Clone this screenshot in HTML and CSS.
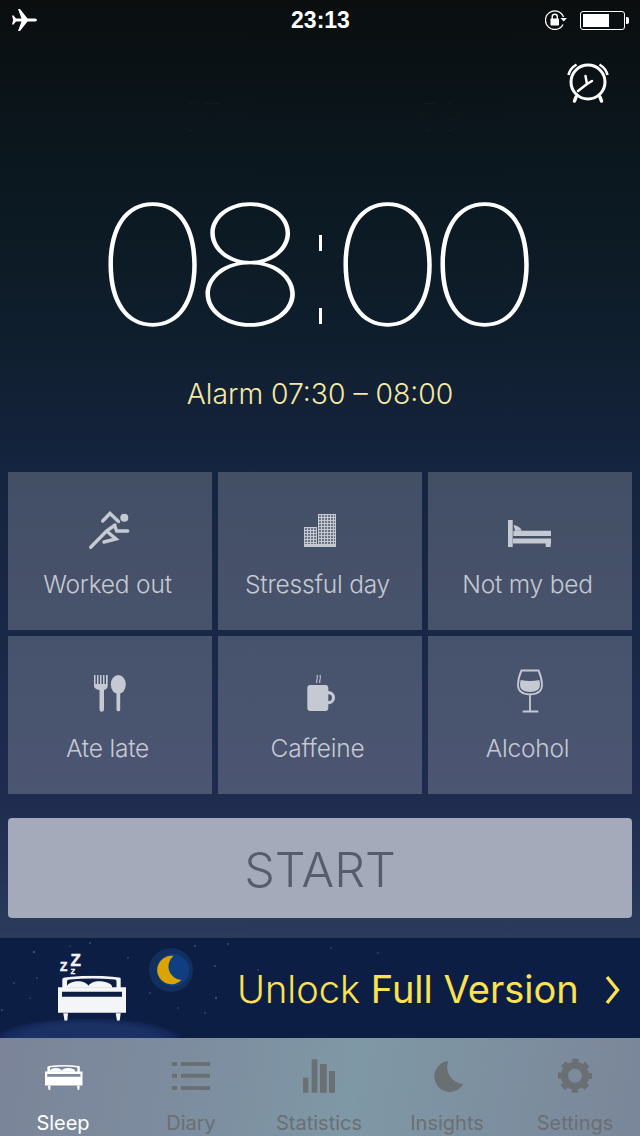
FILE: index.html
```html
<!DOCTYPE html>
<html lang="en">
<head>
	<meta charset="UTF-8">
	<title>Sleep</title>
	<link rel="stylesheet" href="styles.css">
</head>
<body>
	<svg class="defs" width="0" height="0">
		<symbol id="bed" viewBox="0 0 68 45">
			<path d="M4.300 12.500V4.500C4.300 2.500 5 2 7 1.700C24 -.6 44 -.6 61 1.700C63 2 62.700 2.500 62.700 4.500V12.500H58.500V6C58.500 4.500 58 4 56.500 3.800C42 2.300 26 2.300 11.500 3.800C10 4 9 4.500 9 6V12.500Z"/>
			<path d="M9 12V10.500C10 7 16 5.500 20 5.500C25 5.500 29 7.500 30.500 10C32 7.500 36 5.500 41 5.500C46 5.500 53 7 54 10.500V12Z"/>
			<path d="M0 11.500H68V37H0ZM4 16V21H64V16Z" fill-rule="evenodd"/>
			<path d="M5.300 37.500H10L9.300 45H6.500ZM57.700 37.500H62.700L61.700 45H59Z"/>
		</symbol>
	</svg>

	<div class="status">
		<svg class="plane" width="25" height="24" viewBox="0 0 25 24"><path d="M25 12C25 11 23.500 10.500 22 10.500H15.500L8 1H6L9.500 10.500H4L1.500 7.500H0L1.200 12L0 16.500H1.500L4 13.500H9.500L6 23H8L15.500 13.500H22C23.500 13.500 25 13 25 12Z"/></svg>
		<div class="status-time">23:13</div>
		<div class="status-right">
			<svg class="lock" width="24" height="20" viewBox="0 0 24 20">
				<path d="M18 14.500A9.300 9.300 0 1 1 18.500 7" fill="none" stroke="#fff" stroke-width="1.300"/>
				<path d="M15.500 8H22L18.700 11.500Z" fill="#fff"/>
				<rect x="5.500" y="8.500" width="8.500" height="7" rx=".8" fill="#fff"/>
				<path d="M7.200 9V6.800A2.500 2.500 0 0 1 12.300 6.800V9" fill="none" stroke="#fff" stroke-width="1.400"/>
			</svg>
			<div class="battery"><div class="battery-fill"></div></div>
			<div class="battery-nub"></div>
		</div>
	</div>

	<div class="head">
		<span class="ghost ghost-hour">07</span>
		<span class="ghost ghost-min">59</span>
		<svg class="alarm-icon" width="44" height="42" viewBox="0 0 44 42">
			<circle cx="22" cy="20" r="17" fill="none" stroke="#fff" stroke-width="3"/>
			<path d="M2.500 13C3.500 8 6.500 5 10.500 2.500M41.500 13C40.500 8 37.500 5 33.500 2.500" fill="none" stroke="#fff" stroke-width="2.500"/>
			<path d="M19.500 14L21 22L26 19M21 22L12 29" fill="none" stroke="#fff" stroke-width="2.500" stroke-linecap="round" stroke-linejoin="round"/>
			<path d="M10 35L8.500 39M34 35L35.500 39" fill="none" stroke="#fff" stroke-width="3.500" stroke-linecap="round"/>
		</svg>
	</div>

	<div class="clock">
		<span class="clock-part">08</span>
		<div class="clock-colon"><i></i><i></i></div>
		<span class="clock-part">00</span>
	</div>
	<div class="alarm-time">Alarm 07:30 – 08:00</div>

	<div class="tags">
		<div class="tag">
			<svg class="tag-icon" width="48" height="48" viewBox="0 0 48 48">
				<circle cx="38.300" cy="11.700" r="4" class="solid"/>
				<path d="M16.700 15L24 7.500L32.500 15.500M29 20.500L30.700 25H41.700M29 19L20.500 25L4.700 41.300M20.500 25L30 33L18 36" class="line"/>
			</svg>
			<span>Worked out</span>
		</div>
		<div class="tag">
			<svg class="tag-icon" width="48" height="48" viewBox="0 0 48 48">
				<defs>
					<pattern id="win-a" width="3" height="3" patternUnits="userSpaceOnUse" x="8" y="21"><rect width="3" height="3" fill="#c5c9d2"/><rect x="1" y="1" width="2" height="2" fill="#6b7484"/></pattern>
					<pattern id="win-b" width="3" height="3" patternUnits="userSpaceOnUse" x="22" y="8"><rect width="3" height="3" fill="#c5c9d2"/><rect x="1" y="1" width="2" height="2" fill="#6b7484"/></pattern>
				</defs>
				<rect x="8" y="21" width="13" height="20" fill="url(#win-a)"/>
				<rect x="20" y="21" width="1" height="20" class="solid"/>
				<rect x="22" y="8" width="18" height="33" fill="url(#win-b)"/>
				<rect x="39" y="8" width="1" height="33" class="solid"/>
				<rect x="8" y="38" width="32" height="3" class="solid"/>
			</svg>
			<span>Stressful day</span>
		</div>
		<div class="tag">
			<svg class="tag-icon" width="48" height="48" viewBox="0 0 48 48">
				<g class="solid">
					<rect x="2" y="14" width="4.700" height="27"/>
					<path d="M7.500 19Q14 20 15.700 24.700H9Z"/>
					<path d="M7.300 24.700H44.500Q45 24.700 45 26V30H7.300Z"/>
					<rect x="7" y="32.500" width="38" height="5"/>
					<rect x="39.700" y="37" width="5" height="4"/>
				</g>
			</svg>
			<span>Not my bed</span>
		</div>
		<div class="tag">
			<svg class="tag-icon" width="48" height="48" viewBox="0 0 48 48">
				<path class="solid" d="M8 5H9.500V14H11V5H12.500V14H14V5H15.500V14H17V5H18.500V14H20V5H21.700V16C21.700 18 20 19.500 18 20V39.500A2 2 0 0 1 13.500 39.500V20C10 19.500 8 18 8 16Z"/>
				<ellipse cx="32.300" cy="14.500" rx="7.500" ry="9.500" class="solid"/>
				<path class="solid" d="M30.500 20H34.200V39.500A1.850 1.850 0 0 1 30.500 39.500Z"/>
			</svg>
			<span>Ate late</span>
		</div>
		<div class="tag">
			<svg class="tag-icon" width="48" height="48" viewBox="0 0 48 48">
				<rect x="11.300" y="15" width="21" height="26" rx="3" class="solid"/>
				<circle cx="32.500" cy="27.700" r="5" fill="none" stroke="#c5c9d2" stroke-width="3.200"/>
				<path d="M21 13C19.500 10.500 22.500 9.500 21 5M24 13C22.500 10.500 25.500 9.500 24 5" fill="none" stroke="#c5c9d2" stroke-width="1.100"/>
			</svg>
			<span>Caffeine</span>
		</div>
		<div class="tag">
			<svg class="tag-icon" width="48" height="48" viewBox="0 0 48 48">
				<path d="M15.500 .5H32.500Q36 8 36 15Q36 24 24 24.500Q12 24 12 15Q12 8 15.500 .5ZM24 24.500V41.500M16.700 41.500H32.300" fill="none" stroke="#c5c9d2" stroke-width="1.800"/>
				<path class="solid" d="M14.700 10Q24 12 33.300 10Q34 13 34 15Q34 22 24 22Q14 22 14 15Q14 12 14.700 10Z"/>
			</svg>
			<span>Alcohol</span>
		</div>
	</div>

	<div class="start">START</div>

	<div class="banner">
		<svg class="banner-bed" width="80" height="75" viewBox="0 0 80 75">
			<text x="20.500" y="15.500" class="zzz zzz-l">Z</text>
			<text x="10" y="21" class="zzz zzz-m">Z</text>
			<text x="20.700" y="24" class="zzz zzz-s">Z</text>
			<use href="#bed" x="8" y="25.700" width="68" height="45" fill="#f4f5f6"/>
		</svg>
		<svg class="banner-moon" width="44" height="44" viewBox="0 0 44 44">
			<circle cx="22" cy="22" r="22" fill="#12305f"/>
			<circle cx="24" cy="22" r="16" fill="#0f3f80"/>
			<path d="M24.500 8A14.200 14.200 0 1 0 32.500 32A13.500 13.500 0 0 1 24.500 8Z" fill="#d9a404"/>
		</svg>
		<div class="banner-text">Unlock <b>Full Version</b></div>
		<svg class="banner-arrow" width="15" height="30" viewBox="0 0 15 30"><path d="M2 2L12.500 15L2 28" fill="none" stroke="#fde24f" stroke-width="3.400"/></svg>
	</div>

	<div class="tabs">
		<div class="tab tab-on">
			<svg width="48" height="40" viewBox="0 0 48 40"><use href="#bed" x="6" y="9" width="37.700" height="25"/></svg>
			<span>Sleep</span>
		</div>
		<div class="tab">
			<svg width="48" height="40" viewBox="0 0 48 40"><path d="M5 6H10V10H5ZM14 6H43V10H14ZM5 17.700H10V21.700H5ZM14 17.700H43V21.700H14ZM5 30H10V34H5ZM14 30H43V34H14Z"/></svg>
			<span>Diary</span>
		</div>
		<div class="tab">
			<svg width="48" height="40" viewBox="0 0 48 40"><path d="M8 21.700H13.300V36.700H8ZM16.700 3.300H22.300V36.700H16.700ZM25 8H31.700V36.700H25ZM34 15H40V36.700H34Z"/></svg>
			<span>Statistics</span>
		</div>
		<div class="tab">
			<svg width="48" height="40" viewBox="0 0 48 40"><path d="M25.300 5A15.500 15.500 0 1 0 40.300 28A17 17 0 0 1 25.300 5Z"/></svg>
			<span>Insights</span>
		</div>
		<div class="tab">
			<svg width="48" height="40" viewBox="0 0 48 40">
				<circle cx="24" cy="19.700" r="10.500" fill="none" stroke="#6a6f74" stroke-width="7"/>
				<circle cx="24" cy="19.700" r="14.800" fill="none" stroke="#6a6f74" stroke-width="4.500" stroke-dasharray="6.200 5.420" stroke-dashoffset="3.100"/>
			</svg>
			<span>Settings</span>
		</div>
	</div>
</body>
</html>
```

FILE: styles.css
```css
*{
	margin: 0px;
	padding: 0px;
	box-sizing: border-box;
}
body{
	width: 640px;
	height: 1136px;
	overflow: hidden;
	font-family: "Inter", "Liberation Sans", sans-serif;
	background: linear-gradient(#0a0e0f 0px, #0b1820 180px, #0f1e2c 330px, #15243f 470px, #1f2c50 800px, #2a3b5c 938px);
}
.defs{
	position: absolute;
}

/* status bar */
.status{
	display: grid;
	grid-template-columns: 1fr auto 1fr;
	align-items: center;
	height: 40px;
	padding: 0px 11px 0px 12px;
}
.plane{
	fill: #fff;
}
.status-time{
	font-family: "Liberation Sans", sans-serif;
	font-weight: bold;
	font-size: 23px;
	color: #fff;
}
.status-right{
	display: flex;
	align-items: center;
	justify-content: flex-end;
}
.lock{
	margin-right: 11px;
}
.battery{
	width: 45px;
	height: 19px;
	padding: 2px;
	border: 1px solid #fff;
	border-radius: 3px;
}
.battery-fill{
	width: 26px;
	height: 13px;
	background-color: #fff;
}
.battery-nub{
	width: 3px;
	height: 7px;
	margin-left: 1px;
	background-color: #fff;
	border-radius: 0px 2px 2px 0px;
}

/* alarm icon + faint picker digits */
.head{
	display: flex;
	align-items: flex-start;
	height: 150px;
	padding-left: 180px;
}
.ghost{
	margin-top: 57px;
	font-size: 38px;
	font-weight: 100;
	line-height: 40px;
	color: rgba(255,255,255,0.035);
}
.ghost-hour{
	width: 238px;
}
.ghost-min{
	width: 148px;
}
.alarm-icon{
	margin-top: 22px;
}

/* big time: the thin digits are stretched to the wide shape of the reference */
.clock{
	display: flex;
	align-items: center;
	height: 150px;
	padding-left: 109.5px;
	font-size: 166px;
	font-weight: 100;
	color: #fff;
}
.clock-part{
	width: 166px;
	line-height: 150px;
	letter-spacing: -16.5px;
	transform: scaleX(1.19);
}
.clock-colon{
	display: flex;
	flex-direction: column;
	justify-content: space-between;
	width: 69.5px;
	height: 89px;
	margin-top: 29px;
	padding-left: 43px;
}
.clock-colon i{
	display: block;
	width: 3px;
	height: 16px;
	background-color: #fff;
}
.alarm-time{
	margin-top: 35px;
	line-height: 38px;
	text-align: center;
	font-size: 28.3px;
	font-weight: 300;
	color: #f6e9a4;
}

/* tag grid */
.tags{
	display: grid;
	grid-template-columns: repeat(3, 204px);
	grid-auto-rows: 158px;
	gap: 6px;
	margin-top: 59px;
	padding-left: 8px;
}
.tag{
	display: flex;
	flex-direction: column;
	align-items: center;
	padding-top: 34px;
	background-color: rgba(255,255,255,0.2);
	color: #c5c9d2;
	font-size: 24.5px;
	font-weight: 300;
	letter-spacing: -0.2px;
}
.tag span{
	padding-right: 5px;
}
.tag-icon{
	overflow: visible;
	margin-bottom: 15px;
}
.tag-icon .solid{
	fill: #c5c9d2;
}
.tag-icon .line{
	fill: none;
	stroke: #c5c9d2;
	stroke-width: 3.4;
	stroke-linecap: round;
}

.start{
	height: 100px;
	margin: 24px 8px 0px;
	padding-top: 4px;
	line-height: 96px;
	text-align: center;
	font-size: 48.5px;
	font-weight: 300;
	color: #565c69;
	background-color: #a5aabb;
	border-radius: 4px;
}

/* upsell banner */
.banner{
	display: flex;
	align-items: flex-start;
	height: 100px;
	margin-top: 20px;
	padding: 12px 0px 0px 50px;
	background-color: #0d1e45;
	background-image:
		radial-gradient(circle 1.2px at 34px 14px, #4d9fd8, transparent),
		radial-gradient(circle 1px at 14px 45px, #3f7fb0, transparent),
		radial-gradient(circle 1px at 128px 20px, #4d9fd8, transparent),
		radial-gradient(circle 1px at 37px 40px, #3f7fb0, transparent),
		radial-gradient(circle 1px at 215px 28px, #4d9fd8, transparent),
		radial-gradient(circle 1px at 195px 8px, #4d9fd8, transparent),
		radial-gradient(circle 1.2px at 216px 60px, #4d9fd8, transparent),
		radial-gradient(circle 1px at 258px 32px, #3f7fb0, transparent),
		radial-gradient(circle 1px at 228px 6px, #4d9fd8, transparent),
		radial-gradient(circle 1px at 331px 10px, #3f7fb0, transparent),
		radial-gradient(circle 1px at 378px 15px, #3f7fb0, transparent),
		radial-gradient(circle 1px at 178px 70px, #3f7fb0, transparent),
		radial-gradient(circle 1px at 2px 72px, #4d9fd8, transparent),
		radial-gradient(circle 1px at 30px 60px, #3f7fb0, transparent),
		radial-gradient(circle 1px at 70px 8px, #3f7fb0, transparent),
		radial-gradient(circle 1px at 90px 5px, #4d9fd8, transparent),
		radial-gradient(circle 1px at 150px 55px, #3f7fb0, transparent),
		radial-gradient(circle 1px at 205px 75px, #3f7fb0, transparent),
		radial-gradient(ellipse 95px 22px at 88px 102px, #1b3164 70%, #14285a 90%, transparent);
}
.banner-bed{
	flex: none;
}
.banner-moon{
	flex: none;
	margin-left: 19px;
	margin-top: -2px;
}
.zzz{
	font-family: "Liberation Sans", sans-serif;
	font-weight: bold;
	stroke: #f4f5f6;
	stroke-width: .5;
	fill: #f4f5f6;
}
.zzz-l{
	font-size: 17px;
}
.zzz-m{
	font-size: 12px;
}
.zzz-s{
	font-size: 7px;
}
.banner-text{
	margin-left: 44px;
	width: 368px;
	line-height: 78px;
	font-size: 38px;
	font-weight: 300;
	color: #fde24f;
	white-space: nowrap;
}
.banner-text b{
	font-weight: 400;
}
.banner-arrow{
	margin-top: 25px;
}

/* tab bar */
.tabs{
	display: flex;
	height: 98px;
	background: linear-gradient(100deg, #7b8498 0%, #7d8fa0 35%, #7f98a6 55%, #7a8699 100%);
}
.tab{
	display: flex;
	flex: none;
	flex-direction: column;
	align-items: center;
	width: 128px;
	padding-top: 18px;
	font-size: 20px;
	fill: #6a6f74;
	color: #6a6f74;
}
.tab:first-child{
	margin-left: -1px;
}
.tab span{
	margin-top: 14px;
	line-height: 26px;
}
.tab-on{
	fill: #fff;
	color: #fff;
}
```
